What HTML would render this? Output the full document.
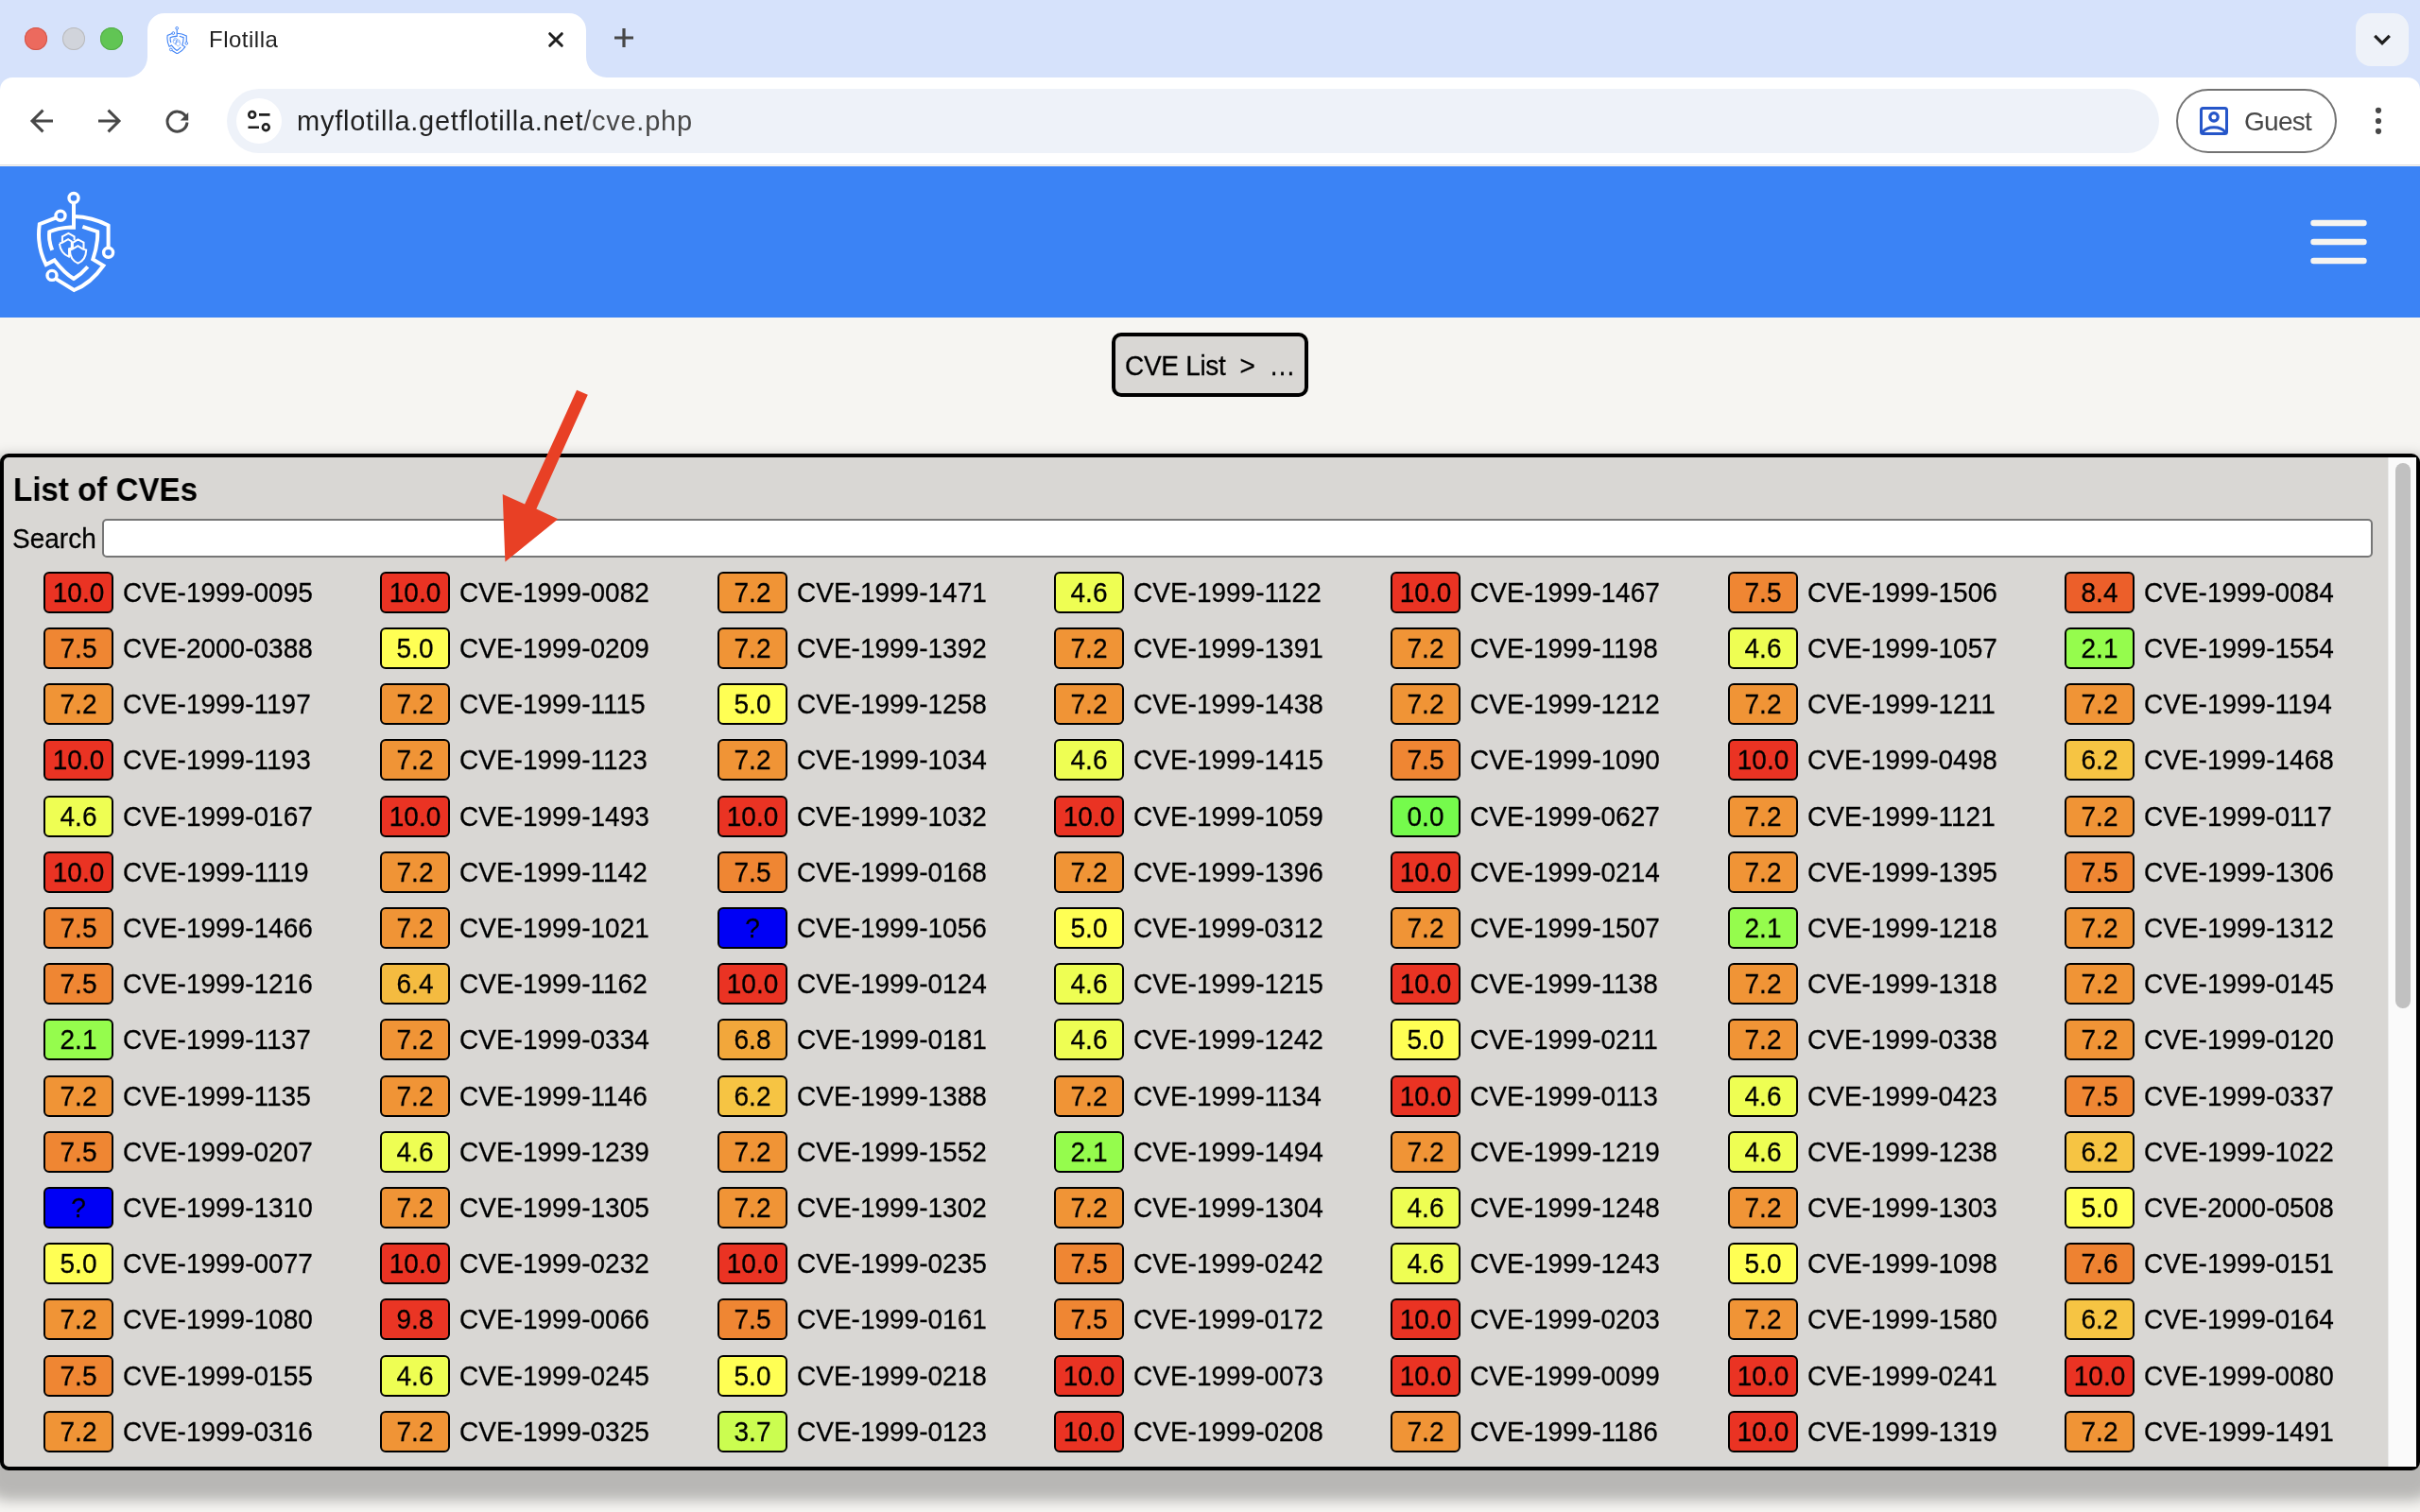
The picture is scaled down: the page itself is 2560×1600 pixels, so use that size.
<!DOCTYPE html>
<html><head><meta charset="utf-8"><title>Flotilla</title>
<style>
*{box-sizing:border-box;margin:0;padding:0}
html,body{width:2560px;height:1600px;overflow:hidden;background:#f6f5f2;font-family:"Liberation Sans",sans-serif;position:relative}
.abs{position:absolute}
#tabtitle,#url,#guesttxt,#crumb,#ptitle,#slabel{will-change:transform}
#strip{left:0;top:0;width:2560px;height:100px;background:#d6e2fb}
.tl{position:absolute;width:24px;height:24px;border-radius:50%;top:29px}
#toolbar{left:0;top:82px;width:2560px;height:92px;background:#fff;border-radius:13px 13px 0 0}
#tbline{left:0;top:174px;width:2560px;height:1px;background:#dfe0df}
#tabtitle{left:221px;top:26px;font-size:24px;letter-spacing:0.5px;color:#1f1f1f;line-height:32px;white-space:nowrap}
#omni{left:240px;top:94px;width:2044px;height:68px;border-radius:34px;background:#eef2f9}
#tune{left:250px;top:104px;width:48px;height:48px;border-radius:50%;background:#fff}
#url{left:314px;top:111px;font-size:29px;letter-spacing:0.75px;line-height:34px;color:#1f1f1f;white-space:nowrap}
#url span{color:#474747}
#guest{left:2302px;top:94px;width:170px;height:68px;border-radius:34px;border:2px solid #737373}
#guesttxt{left:2374px;top:112px;letter-spacing:-0.7px;font-size:28px;line-height:34px;color:#474747}
#tabsearch{left:2492px;top:14px;width:56px;height:56px;border-radius:16px;background:#eef2f9}
#header{left:0;top:176px;width:2560px;height:160px;background:#3b83f5}
#crumb{left:1176px;top:352px;width:208px;height:68px;border:4px solid #000;border-radius:10px;background:#d9d7d4;font-size:28px;line-height:61px;padding-left:10px;letter-spacing:-0.3px;white-space:pre;color:#000}
#panel{left:0;top:480px;width:2560px;height:1076px;border:4px solid #000;border-radius:9px;background:#d9d7d4;box-shadow:0 17px 14px 15px rgba(0,0,0,.25)}
#ptitle{left:14px;top:498px;font-size:35px;font-weight:bold;line-height:40px;color:#000;transform:scaleX(.946);transform-origin:0 0}
#slabel{left:13px;top:554px;font-size:28px;line-height:34px;color:#000}
#search{left:108px;top:549px;width:2402px;height:41px;border:2px solid #767676;border-radius:5px;background:#fff}
#track{left:2526px;top:484px;width:30px;height:1068px;background:#fafafa;border-left:1px solid #ececec}
#thumb{left:2534px;top:490px;width:16px;height:577px;border-radius:8px;background:#c1c1c1}
.it{position:absolute;height:44px;white-space:nowrap;will-change:transform}
.bd{position:absolute;left:0;top:0;width:74px;height:44px;border:2px solid #000;border-radius:6px;font-size:28px;line-height:42px;text-align:center;color:#000}
.bd s,.nm s,#crumb s,#slabel s{text-decoration:none;display:inline-block;transform:scaleY(1.06);transform-origin:0 31px;-webkit-text-stroke:0.25px #000}
.nm{position:absolute;left:84px;top:1px;font-size:28px;line-height:44px;color:#000}
</style></head>
<body>
<svg width="0" height="0" style="position:absolute">
<defs>
<symbol id="logo" viewBox="30 195 100 120">
<g fill="none" stroke="currentColor" stroke-width="4" stroke-linecap="butt" stroke-linejoin="miter">
<circle cx="78" cy="209.5" r="5" stroke-width="3.4"/>
<path d="M78 214.5 V240.6 L74.5 240.5 C66 241 58 242.5 52.3 245.3 C51.6 252 52.5 258 55.2 264.8"/>
<path d="M78 229.1 C90 229.5 103 232.5 114.6 238.6 V262.2"/>
<circle cx="114.6" cy="267.3" r="5" stroke-width="3.4"/>
<circle cx="64" cy="228.3" r="5" stroke-width="3.4"/>
<path d="M59.5 230.3 L41.8 237.2 C40 250 41.5 266 48.7 280 L57.6 275.4 C63.5 283 70 290 78 295 C83 292 88 288 92.8 282.3"/>
<path d="M87.4 239.8 L103.2 245.2 C103.6 256 101.5 265 98.3 274.4 L109.4 281 C101 293 91 302 78.4 307 L59.6 295.4"/>
<circle cx="55" cy="291.4" r="5" stroke-width="3.4"/>
<g stroke-width="2">
<path d="M65.9 256.5 V250.4 L72.4 246.9 L78.6 250.4 V254.2"/>
<path d="M62.9 257.8 L66.2 256.6 L72.1 253.1 L75.8 255.5 V262.6 L73 263.2 C72.8 267 73.4 269.5 72.9 271.7 C66.5 268.8 63.6 264 62.9 257.8"/>
<path d="M76.9 262.8 V256.8 L82.5 253.4 L88.5 256.6 V263.6"/>
<path d="M73.9 264.8 L77 263.4 L82.5 260.2 L87.6 263.6 L91.2 264.6 C91 271.5 87.5 276.5 82.5 278.6 C77.5 276.5 74 271.5 73.9 264.8 Z"/>
</g>
</g>
</symbol>
</defs>
</svg>

<div id="strip" class="abs"></div>
<div class="tl" style="left:26px;background:#ec6a5e;box-shadow:inset 0 0 0 1px #d3574a"></div>
<div class="tl" style="left:66px;background:#d1d4db;box-shadow:inset 0 0 0 1px #b9babd"></div>
<div class="tl" style="left:106px;background:#61c554;box-shadow:inset 0 0 0 1px #53ac47"></div>
<div id="toolbar" class="abs"></div>
<svg class="abs" style="left:0;top:0" width="700" height="90"><path d="M134 82 A22 22 0 0 0 156 60 V32 A18 18 0 0 1 174 14 H602 A18 18 0 0 1 620 32 V60 A22 22 0 0 0 642 82 Z" fill="#fff"/></svg>
<svg class="abs" style="left:176px;top:27px;color:#3f83f6" width="24" height="30" viewBox="37.5 200 87 107"><use href="#logo" x="30" y="195" width="100" height="120"/></svg>
<div id="tabtitle" class="abs">Flotilla</div>
<svg class="abs" style="left:578px;top:32px" width="20" height="20" viewBox="0 0 20 20"><path d="M3.7 3.7 L16.3 16.3 M16.3 3.7 L3.7 16.3" stroke="#1f1f1f" stroke-width="3" stroke-linecap="round"/></svg>
<svg class="abs" style="left:648px;top:28px" width="24" height="24" viewBox="0 0 24 24"><path d="M12 2 V22 M2 12 H22" stroke="#474747" stroke-width="3.2"/></svg>
<div id="tabsearch" class="abs"></div>
<svg class="abs" style="left:2508px;top:33px" width="24" height="18" viewBox="0 0 24 18"><path d="M4.2 4.8 L12 12.6 L19.8 4.8" fill="none" stroke="#1f1f1f" stroke-width="3.3"/></svg>
<div id="tbline" class="abs"></div>
<!-- nav -->
<svg class="abs" style="left:30px;top:114px" width="28" height="28" viewBox="0 0 28 28"><path d="M26 14 H5 M15.5 2.6 L4 14 L15.5 25.4" fill="none" stroke="#474747" stroke-width="3"/></svg>
<svg class="abs" style="left:102px;top:114px" width="28" height="28" viewBox="0 0 28 28"><path d="M2 14 H23 M12.5 2.6 L24 14 L12.5 25.4" fill="none" stroke="#474747" stroke-width="3"/></svg>
<svg class="abs" style="left:174px;top:116px" width="28" height="28" viewBox="0 0 28 28"><path d="M24 13.5 A10.5 10.5 0 1 1 22.6 7.3" fill="none" stroke="#474747" stroke-width="3"/><path d="M25.2 3 V11.5 H16.7 Z" fill="#474747"/></svg>
<div id="omni" class="abs"></div>
<div id="tune" class="abs"></div>
<svg class="abs" style="left:258px;top:112px" width="32" height="32" viewBox="0 0 32 32"><g fill="none" stroke="#1f1f1f" stroke-width="2.6"><circle cx="8.7" cy="9.4" r="3.4"/><circle cx="23.3" cy="22.7" r="3.4"/><path d="M16 9.4 H27.5 M4.5 22.7 H16"/></g></svg>
<div id="url" class="abs">myflotilla.getflotilla.net<span>/cve.php</span></div>
<div id="guest" class="abs"></div>
<svg class="abs" style="left:2325px;top:111px" width="34" height="34" viewBox="0 0 34 34"><g fill="none" stroke="#2656c9" stroke-width="3"><rect x="3.5" y="3.5" width="27" height="27" rx="2"/><circle cx="17" cy="12.8" r="4.2" stroke-width="3.3"/><path d="M5 29 C10 22 24 22 29 29"/></g></svg>
<div id="guesttxt" class="abs">Guest</div>
<svg class="abs" style="left:2508px;top:110px" width="16" height="36" viewBox="0 0 16 36"><g fill="#474747"><circle cx="8" cy="6.8" r="3.1"/><circle cx="8" cy="18" r="3.1"/><circle cx="8" cy="28.8" r="3.1"/></g></svg>

<!-- page -->
<div id="header" class="abs"></div>
<svg class="abs" style="left:30px;top:195px;color:#fff" width="100" height="120" viewBox="30 195 100 120"><use href="#logo" x="30" y="195" width="100" height="120"/></svg>
<svg class="abs" style="left:2440px;top:230px" width="70" height="52" viewBox="0 0 70 52"><g stroke="#f6f4f0" stroke-width="6.4" stroke-linecap="round"><path d="M7.5 6 H60.5 M7.5 26 H60.5 M7.5 46 H60.5"/></g></svg>
<div id="crumb" class="abs"><s>CVE List  &gt;  …</s></div>

<div id="panel" class="abs"></div>
<div id="ptitle" class="abs">List of CVEs</div>
<div id="slabel" class="abs"><s>Search</s></div>
<div id="search" class="abs"></div>
<div class="it" style="left:46px;top:605px"><span class="bd" style="background:#ea3323"><s>10.0</s></span><span class="nm"><s>CVE-1999-0095</s></span></div>
<div class="it" style="left:402px;top:605px"><span class="bd" style="background:#ea3323"><s>10.0</s></span><span class="nm"><s>CVE-1999-0082</s></span></div>
<div class="it" style="left:759px;top:605px"><span class="bd" style="background:#f09436"><s>7.2</s></span><span class="nm"><s>CVE-1999-1471</s></span></div>
<div class="it" style="left:1115px;top:605px"><span class="bd" style="background:#eefe53"><s>4.6</s></span><span class="nm"><s>CVE-1999-1122</s></span></div>
<div class="it" style="left:1471px;top:605px"><span class="bd" style="background:#ea3323"><s>10.0</s></span><span class="nm"><s>CVE-1999-1467</s></span></div>
<div class="it" style="left:1828px;top:605px"><span class="bd" style="background:#ef8633"><s>7.5</s></span><span class="nm"><s>CVE-1999-1506</s></span></div>
<div class="it" style="left:2184px;top:605px"><span class="bd" style="background:#ec5f2a"><s>8.4</s></span><span class="nm"><s>CVE-1999-0084</s></span></div>
<div class="it" style="left:46px;top:664px"><span class="bd" style="background:#ef8633"><s>7.5</s></span><span class="nm"><s>CVE-2000-0388</s></span></div>
<div class="it" style="left:402px;top:664px"><span class="bd" style="background:#ffff54"><s>5.0</s></span><span class="nm"><s>CVE-1999-0209</s></span></div>
<div class="it" style="left:759px;top:664px"><span class="bd" style="background:#f09436"><s>7.2</s></span><span class="nm"><s>CVE-1999-1392</s></span></div>
<div class="it" style="left:1115px;top:664px"><span class="bd" style="background:#f09436"><s>7.2</s></span><span class="nm"><s>CVE-1999-1391</s></span></div>
<div class="it" style="left:1471px;top:664px"><span class="bd" style="background:#f09436"><s>7.2</s></span><span class="nm"><s>CVE-1999-1198</s></span></div>
<div class="it" style="left:1828px;top:664px"><span class="bd" style="background:#eefe53"><s>4.6</s></span><span class="nm"><s>CVE-1999-1057</s></span></div>
<div class="it" style="left:2184px;top:664px"><span class="bd" style="background:#95fc4d"><s>2.1</s></span><span class="nm"><s>CVE-1999-1554</s></span></div>
<div class="it" style="left:46px;top:723px"><span class="bd" style="background:#f09436"><s>7.2</s></span><span class="nm"><s>CVE-1999-1197</s></span></div>
<div class="it" style="left:402px;top:723px"><span class="bd" style="background:#f09436"><s>7.2</s></span><span class="nm"><s>CVE-1999-1115</s></span></div>
<div class="it" style="left:759px;top:723px"><span class="bd" style="background:#ffff54"><s>5.0</s></span><span class="nm"><s>CVE-1999-1258</s></span></div>
<div class="it" style="left:1115px;top:723px"><span class="bd" style="background:#f09436"><s>7.2</s></span><span class="nm"><s>CVE-1999-1438</s></span></div>
<div class="it" style="left:1471px;top:723px"><span class="bd" style="background:#f09436"><s>7.2</s></span><span class="nm"><s>CVE-1999-1212</s></span></div>
<div class="it" style="left:1828px;top:723px"><span class="bd" style="background:#f09436"><s>7.2</s></span><span class="nm"><s>CVE-1999-1211</s></span></div>
<div class="it" style="left:2184px;top:723px"><span class="bd" style="background:#f09436"><s>7.2</s></span><span class="nm"><s>CVE-1999-1194</s></span></div>
<div class="it" style="left:46px;top:782px"><span class="bd" style="background:#ea3323"><s>10.0</s></span><span class="nm"><s>CVE-1999-1193</s></span></div>
<div class="it" style="left:402px;top:782px"><span class="bd" style="background:#f09436"><s>7.2</s></span><span class="nm"><s>CVE-1999-1123</s></span></div>
<div class="it" style="left:759px;top:782px"><span class="bd" style="background:#f09436"><s>7.2</s></span><span class="nm"><s>CVE-1999-1034</s></span></div>
<div class="it" style="left:1115px;top:782px"><span class="bd" style="background:#eefe53"><s>4.6</s></span><span class="nm"><s>CVE-1999-1415</s></span></div>
<div class="it" style="left:1471px;top:782px"><span class="bd" style="background:#ef8633"><s>7.5</s></span><span class="nm"><s>CVE-1999-1090</s></span></div>
<div class="it" style="left:1828px;top:782px"><span class="bd" style="background:#ea3323"><s>10.0</s></span><span class="nm"><s>CVE-1999-0498</s></span></div>
<div class="it" style="left:2184px;top:782px"><span class="bd" style="background:#f6c443"><s>6.2</s></span><span class="nm"><s>CVE-1999-1468</s></span></div>
<div class="it" style="left:46px;top:842px"><span class="bd" style="background:#eefe53"><s>4.6</s></span><span class="nm"><s>CVE-1999-0167</s></span></div>
<div class="it" style="left:402px;top:842px"><span class="bd" style="background:#ea3323"><s>10.0</s></span><span class="nm"><s>CVE-1999-1493</s></span></div>
<div class="it" style="left:759px;top:842px"><span class="bd" style="background:#ea3323"><s>10.0</s></span><span class="nm"><s>CVE-1999-1032</s></span></div>
<div class="it" style="left:1115px;top:842px"><span class="bd" style="background:#ea3323"><s>10.0</s></span><span class="nm"><s>CVE-1999-1059</s></span></div>
<div class="it" style="left:1471px;top:842px"><span class="bd" style="background:#75fb4c"><s>0.0</s></span><span class="nm"><s>CVE-1999-0627</s></span></div>
<div class="it" style="left:1828px;top:842px"><span class="bd" style="background:#f09436"><s>7.2</s></span><span class="nm"><s>CVE-1999-1121</s></span></div>
<div class="it" style="left:2184px;top:842px"><span class="bd" style="background:#f09436"><s>7.2</s></span><span class="nm"><s>CVE-1999-0117</s></span></div>
<div class="it" style="left:46px;top:901px"><span class="bd" style="background:#ea3323"><s>10.0</s></span><span class="nm"><s>CVE-1999-1119</s></span></div>
<div class="it" style="left:402px;top:901px"><span class="bd" style="background:#f09436"><s>7.2</s></span><span class="nm"><s>CVE-1999-1142</s></span></div>
<div class="it" style="left:759px;top:901px"><span class="bd" style="background:#ef8633"><s>7.5</s></span><span class="nm"><s>CVE-1999-0168</s></span></div>
<div class="it" style="left:1115px;top:901px"><span class="bd" style="background:#f09436"><s>7.2</s></span><span class="nm"><s>CVE-1999-1396</s></span></div>
<div class="it" style="left:1471px;top:901px"><span class="bd" style="background:#ea3323"><s>10.0</s></span><span class="nm"><s>CVE-1999-0214</s></span></div>
<div class="it" style="left:1828px;top:901px"><span class="bd" style="background:#f09436"><s>7.2</s></span><span class="nm"><s>CVE-1999-1395</s></span></div>
<div class="it" style="left:2184px;top:901px"><span class="bd" style="background:#ef8633"><s>7.5</s></span><span class="nm"><s>CVE-1999-1306</s></span></div>
<div class="it" style="left:46px;top:960px"><span class="bd" style="background:#ef8633"><s>7.5</s></span><span class="nm"><s>CVE-1999-1466</s></span></div>
<div class="it" style="left:402px;top:960px"><span class="bd" style="background:#f09436"><s>7.2</s></span><span class="nm"><s>CVE-1999-1021</s></span></div>
<div class="it" style="left:759px;top:960px"><span class="bd" style="background:#0000f5"><s>?</s></span><span class="nm"><s>CVE-1999-1056</s></span></div>
<div class="it" style="left:1115px;top:960px"><span class="bd" style="background:#ffff54"><s>5.0</s></span><span class="nm"><s>CVE-1999-0312</s></span></div>
<div class="it" style="left:1471px;top:960px"><span class="bd" style="background:#f09436"><s>7.2</s></span><span class="nm"><s>CVE-1999-1507</s></span></div>
<div class="it" style="left:1828px;top:960px"><span class="bd" style="background:#95fc4d"><s>2.1</s></span><span class="nm"><s>CVE-1999-1218</s></span></div>
<div class="it" style="left:2184px;top:960px"><span class="bd" style="background:#f09436"><s>7.2</s></span><span class="nm"><s>CVE-1999-1312</s></span></div>
<div class="it" style="left:46px;top:1019px"><span class="bd" style="background:#ef8633"><s>7.5</s></span><span class="nm"><s>CVE-1999-1216</s></span></div>
<div class="it" style="left:402px;top:1019px"><span class="bd" style="background:#f4bb40"><s>6.4</s></span><span class="nm"><s>CVE-1999-1162</s></span></div>
<div class="it" style="left:759px;top:1019px"><span class="bd" style="background:#ea3323"><s>10.0</s></span><span class="nm"><s>CVE-1999-0124</s></span></div>
<div class="it" style="left:1115px;top:1019px"><span class="bd" style="background:#eefe53"><s>4.6</s></span><span class="nm"><s>CVE-1999-1215</s></span></div>
<div class="it" style="left:1471px;top:1019px"><span class="bd" style="background:#ea3323"><s>10.0</s></span><span class="nm"><s>CVE-1999-1138</s></span></div>
<div class="it" style="left:1828px;top:1019px"><span class="bd" style="background:#f09436"><s>7.2</s></span><span class="nm"><s>CVE-1999-1318</s></span></div>
<div class="it" style="left:2184px;top:1019px"><span class="bd" style="background:#f09436"><s>7.2</s></span><span class="nm"><s>CVE-1999-0145</s></span></div>
<div class="it" style="left:46px;top:1078px"><span class="bd" style="background:#95fc4d"><s>2.1</s></span><span class="nm"><s>CVE-1999-1137</s></span></div>
<div class="it" style="left:402px;top:1078px"><span class="bd" style="background:#f09436"><s>7.2</s></span><span class="nm"><s>CVE-1999-0334</s></span></div>
<div class="it" style="left:759px;top:1078px"><span class="bd" style="background:#f2a73b"><s>6.8</s></span><span class="nm"><s>CVE-1999-0181</s></span></div>
<div class="it" style="left:1115px;top:1078px"><span class="bd" style="background:#eefe53"><s>4.6</s></span><span class="nm"><s>CVE-1999-1242</s></span></div>
<div class="it" style="left:1471px;top:1078px"><span class="bd" style="background:#ffff54"><s>5.0</s></span><span class="nm"><s>CVE-1999-0211</s></span></div>
<div class="it" style="left:1828px;top:1078px"><span class="bd" style="background:#f09436"><s>7.2</s></span><span class="nm"><s>CVE-1999-0338</s></span></div>
<div class="it" style="left:2184px;top:1078px"><span class="bd" style="background:#f09436"><s>7.2</s></span><span class="nm"><s>CVE-1999-0120</s></span></div>
<div class="it" style="left:46px;top:1138px"><span class="bd" style="background:#f09436"><s>7.2</s></span><span class="nm"><s>CVE-1999-1135</s></span></div>
<div class="it" style="left:402px;top:1138px"><span class="bd" style="background:#f09436"><s>7.2</s></span><span class="nm"><s>CVE-1999-1146</s></span></div>
<div class="it" style="left:759px;top:1138px"><span class="bd" style="background:#f6c443"><s>6.2</s></span><span class="nm"><s>CVE-1999-1388</s></span></div>
<div class="it" style="left:1115px;top:1138px"><span class="bd" style="background:#f09436"><s>7.2</s></span><span class="nm"><s>CVE-1999-1134</s></span></div>
<div class="it" style="left:1471px;top:1138px"><span class="bd" style="background:#ea3323"><s>10.0</s></span><span class="nm"><s>CVE-1999-0113</s></span></div>
<div class="it" style="left:1828px;top:1138px"><span class="bd" style="background:#eefe53"><s>4.6</s></span><span class="nm"><s>CVE-1999-0423</s></span></div>
<div class="it" style="left:2184px;top:1138px"><span class="bd" style="background:#ef8633"><s>7.5</s></span><span class="nm"><s>CVE-1999-0337</s></span></div>
<div class="it" style="left:46px;top:1197px"><span class="bd" style="background:#ef8633"><s>7.5</s></span><span class="nm"><s>CVE-1999-0207</s></span></div>
<div class="it" style="left:402px;top:1197px"><span class="bd" style="background:#eefe53"><s>4.6</s></span><span class="nm"><s>CVE-1999-1239</s></span></div>
<div class="it" style="left:759px;top:1197px"><span class="bd" style="background:#f09436"><s>7.2</s></span><span class="nm"><s>CVE-1999-1552</s></span></div>
<div class="it" style="left:1115px;top:1197px"><span class="bd" style="background:#95fc4d"><s>2.1</s></span><span class="nm"><s>CVE-1999-1494</s></span></div>
<div class="it" style="left:1471px;top:1197px"><span class="bd" style="background:#f09436"><s>7.2</s></span><span class="nm"><s>CVE-1999-1219</s></span></div>
<div class="it" style="left:1828px;top:1197px"><span class="bd" style="background:#eefe53"><s>4.6</s></span><span class="nm"><s>CVE-1999-1238</s></span></div>
<div class="it" style="left:2184px;top:1197px"><span class="bd" style="background:#f6c443"><s>6.2</s></span><span class="nm"><s>CVE-1999-1022</s></span></div>
<div class="it" style="left:46px;top:1256px"><span class="bd" style="background:#0000f5"><s>?</s></span><span class="nm"><s>CVE-1999-1310</s></span></div>
<div class="it" style="left:402px;top:1256px"><span class="bd" style="background:#f09436"><s>7.2</s></span><span class="nm"><s>CVE-1999-1305</s></span></div>
<div class="it" style="left:759px;top:1256px"><span class="bd" style="background:#f09436"><s>7.2</s></span><span class="nm"><s>CVE-1999-1302</s></span></div>
<div class="it" style="left:1115px;top:1256px"><span class="bd" style="background:#f09436"><s>7.2</s></span><span class="nm"><s>CVE-1999-1304</s></span></div>
<div class="it" style="left:1471px;top:1256px"><span class="bd" style="background:#eefe53"><s>4.6</s></span><span class="nm"><s>CVE-1999-1248</s></span></div>
<div class="it" style="left:1828px;top:1256px"><span class="bd" style="background:#f09436"><s>7.2</s></span><span class="nm"><s>CVE-1999-1303</s></span></div>
<div class="it" style="left:2184px;top:1256px"><span class="bd" style="background:#ffff54"><s>5.0</s></span><span class="nm"><s>CVE-2000-0508</s></span></div>
<div class="it" style="left:46px;top:1315px"><span class="bd" style="background:#ffff54"><s>5.0</s></span><span class="nm"><s>CVE-1999-0077</s></span></div>
<div class="it" style="left:402px;top:1315px"><span class="bd" style="background:#ea3323"><s>10.0</s></span><span class="nm"><s>CVE-1999-0232</s></span></div>
<div class="it" style="left:759px;top:1315px"><span class="bd" style="background:#ea3323"><s>10.0</s></span><span class="nm"><s>CVE-1999-0235</s></span></div>
<div class="it" style="left:1115px;top:1315px"><span class="bd" style="background:#ef8633"><s>7.5</s></span><span class="nm"><s>CVE-1999-0242</s></span></div>
<div class="it" style="left:1471px;top:1315px"><span class="bd" style="background:#eefe53"><s>4.6</s></span><span class="nm"><s>CVE-1999-1243</s></span></div>
<div class="it" style="left:1828px;top:1315px"><span class="bd" style="background:#ffff54"><s>5.0</s></span><span class="nm"><s>CVE-1999-1098</s></span></div>
<div class="it" style="left:2184px;top:1315px"><span class="bd" style="background:#ee8231"><s>7.6</s></span><span class="nm"><s>CVE-1999-0151</s></span></div>
<div class="it" style="left:46px;top:1374px"><span class="bd" style="background:#f09436"><s>7.2</s></span><span class="nm"><s>CVE-1999-1080</s></span></div>
<div class="it" style="left:402px;top:1374px"><span class="bd" style="background:#ea3524"><s>9.8</s></span><span class="nm"><s>CVE-1999-0066</s></span></div>
<div class="it" style="left:759px;top:1374px"><span class="bd" style="background:#ef8633"><s>7.5</s></span><span class="nm"><s>CVE-1999-0161</s></span></div>
<div class="it" style="left:1115px;top:1374px"><span class="bd" style="background:#ef8633"><s>7.5</s></span><span class="nm"><s>CVE-1999-0172</s></span></div>
<div class="it" style="left:1471px;top:1374px"><span class="bd" style="background:#ea3323"><s>10.0</s></span><span class="nm"><s>CVE-1999-0203</s></span></div>
<div class="it" style="left:1828px;top:1374px"><span class="bd" style="background:#f09436"><s>7.2</s></span><span class="nm"><s>CVE-1999-1580</s></span></div>
<div class="it" style="left:2184px;top:1374px"><span class="bd" style="background:#f6c443"><s>6.2</s></span><span class="nm"><s>CVE-1999-0164</s></span></div>
<div class="it" style="left:46px;top:1434px"><span class="bd" style="background:#ef8633"><s>7.5</s></span><span class="nm"><s>CVE-1999-0155</s></span></div>
<div class="it" style="left:402px;top:1434px"><span class="bd" style="background:#eefe53"><s>4.6</s></span><span class="nm"><s>CVE-1999-0245</s></span></div>
<div class="it" style="left:759px;top:1434px"><span class="bd" style="background:#ffff54"><s>5.0</s></span><span class="nm"><s>CVE-1999-0218</s></span></div>
<div class="it" style="left:1115px;top:1434px"><span class="bd" style="background:#ea3323"><s>10.0</s></span><span class="nm"><s>CVE-1999-0073</s></span></div>
<div class="it" style="left:1471px;top:1434px"><span class="bd" style="background:#ea3323"><s>10.0</s></span><span class="nm"><s>CVE-1999-0099</s></span></div>
<div class="it" style="left:1828px;top:1434px"><span class="bd" style="background:#ea3323"><s>10.0</s></span><span class="nm"><s>CVE-1999-0241</s></span></div>
<div class="it" style="left:2184px;top:1434px"><span class="bd" style="background:#ea3323"><s>10.0</s></span><span class="nm"><s>CVE-1999-0080</s></span></div>
<div class="it" style="left:46px;top:1493px"><span class="bd" style="background:#f09436"><s>7.2</s></span><span class="nm"><s>CVE-1999-0316</s></span></div>
<div class="it" style="left:402px;top:1493px"><span class="bd" style="background:#f09436"><s>7.2</s></span><span class="nm"><s>CVE-1999-0325</s></span></div>
<div class="it" style="left:759px;top:1493px"><span class="bd" style="background:#cbfd50"><s>3.7</s></span><span class="nm"><s>CVE-1999-0123</s></span></div>
<div class="it" style="left:1115px;top:1493px"><span class="bd" style="background:#ea3323"><s>10.0</s></span><span class="nm"><s>CVE-1999-0208</s></span></div>
<div class="it" style="left:1471px;top:1493px"><span class="bd" style="background:#f09436"><s>7.2</s></span><span class="nm"><s>CVE-1999-1186</s></span></div>
<div class="it" style="left:1828px;top:1493px"><span class="bd" style="background:#ea3323"><s>10.0</s></span><span class="nm"><s>CVE-1999-1319</s></span></div>
<div class="it" style="left:2184px;top:1493px"><span class="bd" style="background:#f09436"><s>7.2</s></span><span class="nm"><s>CVE-1999-1491</s></span></div>
<div id="track" class="abs"></div>
<div id="thumb" class="abs"></div>
<svg class="abs" style="left:520px;top:405px" width="110" height="200" viewBox="520 405 110 200"><path d="M610.1 412.8 L621.8 417.8 L567.4 538.6 L590.3 549.3 L534.4 594.4 L531.7 522.9 L555.1 533.6 Z" fill="#e84025"/></svg>
</body></html>
